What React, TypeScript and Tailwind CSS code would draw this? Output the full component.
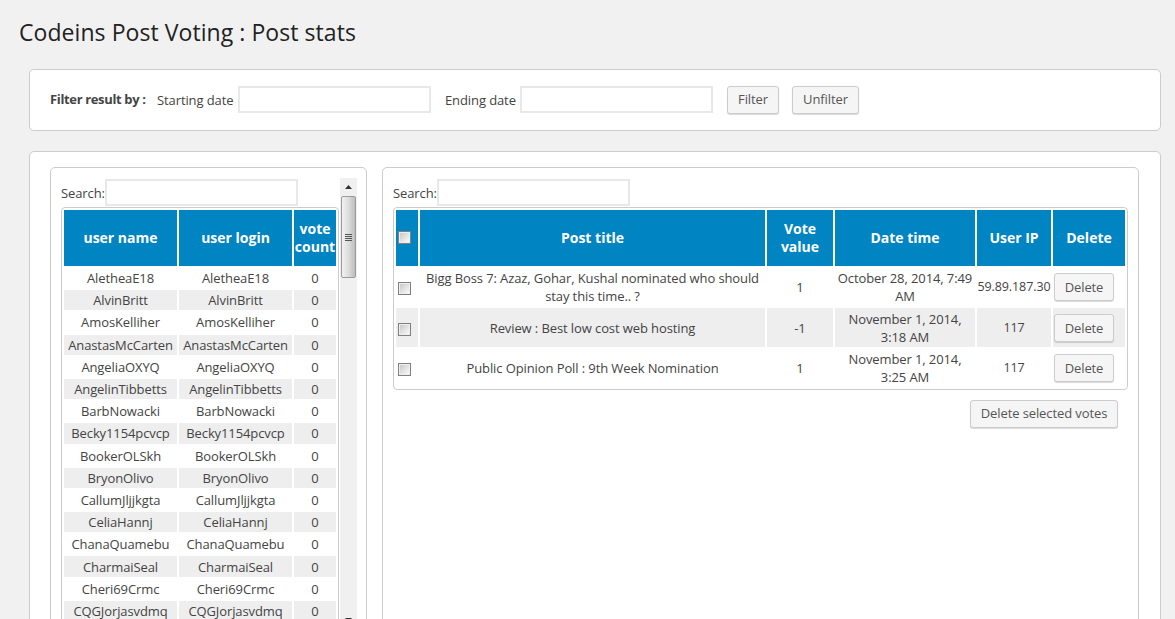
const users = [
  "AletheaE18", "AlvinBritt", "AmosKelliher", "AnastasMcCarten", "AngeliaOXYQ", "AngelinTibbetts",
  "BarbNowacki", "Becky1154pcvcp", "BookerOLSkh", "BryonOlivo", "CallumJljjkgta", "CeliaHannj",
  "ChanaQuamebu", "CharmaiSeal", "Cheri69Crmc", "CQGJorjasvdmq",
];

const votes = [
  { title: "Bigg Boss 7: Azaz, Gohar, Kushal nominated who should stay this time.. ?", value: "1", date: "October 28, 2014, 7:49 AM", ip: "59.89.187.30" },
  { title: "Review : Best low cost web hosting", value: "-1", date: "November 1, 2014, 3:18 AM", ip: "117" },
  { title: "Public Opinion Poll : 9th Week Nomination", value: "1", date: "November 1, 2014, 3:25 AM", ip: "117" },
];

const inputClass = "h-[27px] w-[193px] border-2 border-[#e8e8e8] bg-white";
const buttonClass = "h-[28px] rounded-[3px] border border-[#ccc] bg-[#f5f5f5] text-[13px] text-[#555] shadow-[0_1px_1px_rgba(0,0,0,0.15)]";
const headClass = "bg-[#0084c2] p-0 text-[14px] font-bold leading-[18px] tracking-normal text-white";
const checkClass = "ml-[2px] h-[13px] w-[13px] border border-[#808080] bg-gradient-to-br from-[#c4c4c4] to-white shadow-[inset_0_0_0_1px_#eeeeee]";

function Search() {
  return (
    <div className="flex h-[27px] items-center">
      <span className="mt-[3px] w-[44px] text-[13px] text-[#444]">Search:</span>
      <div className={inputClass} />
    </div>
  );
}

function Scrollbar() {
  return (
    <div className="flex h-[450px] w-[17px] shrink-0 flex-col items-center bg-[#f0f0f0]">
      <div className="flex h-[17px] items-center">
        <svg width="7" height="4" viewBox="0 0 7 4"><path d="M3.5 0 7 4H0z" fill="#333" /></svg>
      </div>
      <div className="mt-[1px] flex h-[82px] w-[15px] items-center justify-center rounded-[2px] border border-[#9a9a9a] bg-gradient-to-r from-[#f2f2f2] via-[#dcdcdc] to-[#bdbdbd]">
        <div className="flex flex-col gap-[1px]">
          <div className="h-px w-[7px] bg-[#555]" />
          <div className="h-px w-[7px] bg-[#555]" />
          <div className="h-px w-[7px] bg-[#555]" />
          <div className="h-px w-[7px] bg-[#555]" />
        </div>
      </div>
      <div className="mt-auto flex h-[17px] items-center">
        <svg width="7" height="4" viewBox="0 0 7 4"><path d="M3.5 4 7 0H0z" fill="#333" /></svg>
      </div>
    </div>
  );
}

export default function App() {
  return (
    <div className="h-[619px] overflow-hidden bg-[#f1f1f1] font-['Open_Sans',sans-serif] text-[13px] tracking-[-0.1px] text-[#444]">
      <h1 className="pl-[19px] pt-[17px] text-[23px] leading-[30px] tracking-[0.06px] text-[#222]">Codeins Post Voting : Post stats</h1>

      <div className="ml-[29px] mr-[14px] mt-[22px] flex h-[62px] items-center rounded-[5px] border border-[#ccc] bg-white pl-[20px]">
        <b className="w-[107px] tracking-[-0.35px] text-[#444]">Filter result by :</b>
        <span className="mt-[1px] w-[81px]">Starting date</span>
        <div className={`${inputClass} -mt-[1px]`} />
        <span className="ml-[14px] mt-[1px] w-[75px]">Ending date</span>
        <div className={`${inputClass} -mt-[1px]`} />
        <button className={`${buttonClass} -mt-[1px] ml-[14px] w-[52px]`}>Filter</button>
        <button className={`${buttonClass} -mt-[1px] ml-[13px] w-[67px]`}>Unfilter</button>
      </div>

      <div className="ml-[29px] mr-[14px] mt-[20px] flex h-[600px] gap-[15px] rounded-[5px] border border-[#ccc] bg-white pl-[20px] pr-[21px] pt-[15px]">
        <div className="flex h-[600px] w-[317px] shrink-0 gap-[1px] rounded-[5px] border border-[#ccc] pl-[10px] pr-[10px] pt-[10px]">
          <div className="w-[278px] shrink-0">
            <div className="mt-[1px]">
              <Search />
            </div>
            <div className="mt-[1px] rounded-[4px] border border-[#ccc]">
              <table className="w-[276px] table-fixed border-separate border-spacing-[2px] text-center">
                <thead>
                  <tr className="h-[56px]">
                    <th className={`${headClass} w-[113px]`}>user name</th>
                    <th className={`${headClass} w-[113px]`}>user login</th>
                    <th className={`${headClass} w-[42px]`}>vote count</th>
                  </tr>
                </thead>
                <tbody>
                  {users.map((name, i) => {
                    const bg = i % 2 === 1 ? "bg-[#eee]" : "";
                    return (
                      <tr key={name} className="h-[20.2px] leading-[20px]">
                        <td className={`${bg} whitespace-nowrap p-0`}>{name}</td>
                        <td className={`${bg} whitespace-nowrap p-0`}>{name}</td>
                        <td className={`${bg} p-0`}>0</td>
                      </tr>
                    );
                  })}
                </tbody>
              </table>
            </div>
          </div>
          <Scrollbar />
        </div>

        <div className="h-[600px] flex-1 rounded-[5px] border border-[#ccc] pl-[10px] pr-[10px] pt-[11px]">
          <Search />
          <div className="mt-[1px] w-[735px] rounded-[4px] border border-[#ccc]">
            <table className="w-[733px] table-fixed border-separate border-spacing-[2px] text-center">
              <thead>
                <tr className="h-[56px]">
                  <th className={`${headClass} w-[22px]`}><div className={`${checkClass} -mt-[1px]`} /></th>
                  <th className={`${headClass} w-[345px]`}>Post title</th>
                  <th className={`${headClass} w-[66px]`}>Vote<br />value</th>
                  <th className={`${headClass} w-[140px]`}>Date time</th>
                  <th className={`${headClass} w-[74px]`}>User IP</th>
                  <th className={`${headClass} w-[72px]`}>Delete</th>
                </tr>
              </thead>
              <tbody>
                {votes.map((v, i) => {
                  const bg = i % 2 === 1 ? "bg-[#eee]" : "";
                  return (
                    <tr key={v.title} className={`${i === 1 ? "h-[39px]" : "h-[38px]"} leading-[18px]`}>
                      <td className={`${bg} p-0`}><div className={`${checkClass} mt-[3px]`} /></td>
                      <td className={`${bg} px-[2px] py-0`}>{v.title}</td>
                      <td className={`${bg} p-0`}>{v.value}</td>
                      <td className={`${bg} p-0`}>{v.date}</td>
                      <td className={`${bg} whitespace-nowrap p-0 text-[12.5px]`}>{v.ip}</td>
                      <td className={`${bg} p-0 text-left`}>
                        <button className={`${buttonClass} ml-[1px] block w-[60px]`}>Delete</button>
                      </td>
                    </tr>
                  );
                })}
              </tbody>
            </table>
          </div>
          <div className="mr-[10px] mt-[10px] flex justify-end">
            <button className={`${buttonClass} w-[148px]`}>Delete selected votes</button>
          </div>
        </div>
      </div>
    </div>
  );
}
